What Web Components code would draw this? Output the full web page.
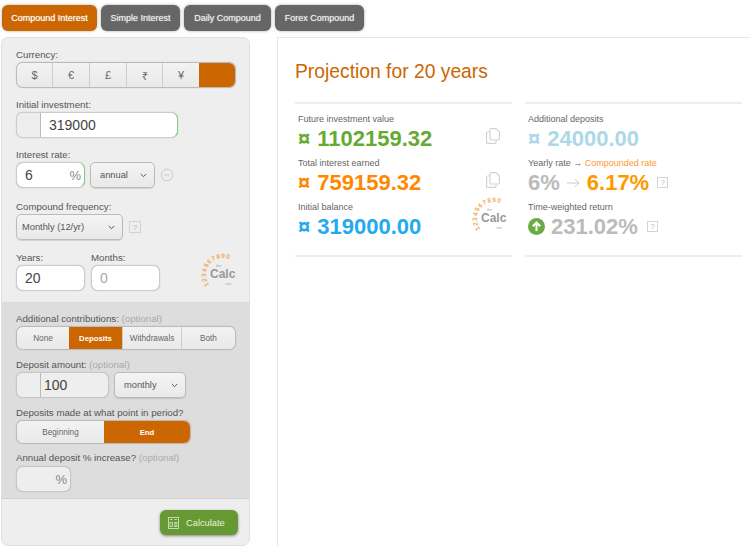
<!DOCTYPE html>
<html>
<head>
<meta charset="utf-8">
<title>Compound Interest</title>
<style>
html, body { margin: 0; height: 546px; overflow: hidden; background: #fff; }
body { font-family: "Liberation Sans", Arial, sans-serif; color: #555; }
calc-page { height: 546px; }
</style>
</head>
<body>
<calc-page>
  <calc-tabs slot="tabs">
    <calc-tab active>Compound Interest</calc-tab>
    <calc-tab style="width:79px">Simple Interest</calc-tab>
    <calc-tab style="width:87px">Daily Compound</calc-tab>
    <calc-tab style="width:89px">Forex Compound</calc-tab>
  </calc-tabs>

  <calc-form slot="form">
    <calc-field label="Currency:" style="--top:0">
      <calc-seg style="width:220px;--cols:35px 37px 37px 36px 37px 1fr">
        <span>$</span><span>€</span><span>£</span><span>₹</span><span>¥</span><span class="on"></span>
      </calc-seg>
    </calc-field>
    <calc-field label="Initial investment:">
      <calc-input addon ok style="width:162px">319000</calc-input>
    </calc-field>
    <calc-field label="Interest rate:">
      <calc-input ok suffix="%" style="width:69px">6</calc-input>
      <calc-select style="width:65px">annual</calc-select>
      <svg width="14" height="14" viewBox="0 0 14 14"><circle cx="7" cy="7" r="5.8" fill="none" stroke="#ccc" stroke-width="1"/><path d="M4.2 7h5.6" stroke="#ccc" stroke-width="1"/></svg>
    </calc-field>
    <calc-field label="Compound frequency:" style="--top:12px">
      <calc-select small style="width:107px">Monthly (12/yr)</calc-select>
      <calc-help style="margin-left:1px;width:12px;height:12px"></calc-help>
    </calc-field>
    <calc-duration>
      <calc-field label="Years:" style="--top:0"><calc-input style="width:69px">20</calc-input></calc-field>
      <calc-field label="Months:" style="--top:0"><calc-input muted style="width:69px">0</calc-input></calc-field>
      <calc-logo style="margin:2px 0 0 auto"></calc-logo>
    </calc-duration>
  </calc-form>

  <calc-extra slot="extra">
    <calc-field style="--top:0">
      <span slot="label">Additional contributions: <i>(optional)</i></span>
      <calc-seg small style="width:220px;height:24px;--cols:52px 53px 59px 1fr">
        <span>None</span><span class="on">Deposits</span><span>Withdrawals</span><span>Both</span>
      </calc-seg>
    </calc-field>
    <calc-field style="--top:8px">
      <span slot="label">Deposit amount: <i>(optional)</i></span>
      <calc-input addon flat style="width:93px">100</calc-input>
      <calc-select style="width:72px">monthly</calc-select>
    </calc-field>
    <calc-field label="Deposits made at what point in period?" style="--top:8px">
      <calc-seg small style="width:175px;height:24px;--cols:87px 1fr">
        <span>Beginning</span><span class="on">End</span>
      </calc-seg>
    </calc-field>
    <calc-field style="--top:7px;--label-gap:2px">
      <span slot="label">Annual deposit % increase? <i>(optional)</i></span>
      <calc-input flat suffix="%" style="width:55px"></calc-input>
    </calc-field>
  </calc-extra>

  <calc-footer slot="footer"><calc-button>Calculate</calc-button></calc-footer>

  <calc-results slot="results" title-text="Projection for 20 years">
    <calc-card slot="left">
      <calc-stat label="Future investment value" color="#66aa33" cur="¤" value="1102159.32"><calc-copy></calc-copy></calc-stat>
      <calc-stat label="Total interest earned" color="#ff8800" cur="¤" value="759159.32"><calc-copy></calc-copy></calc-stat>
      <calc-stat label="Initial balance" color="#22aaee" cur="¤" value="319000.00"><calc-logo style="margin:-8px -5px 0 0"></calc-logo></calc-stat>
    </calc-card>
    <calc-card slot="right">
      <calc-stat label="Additional deposits" color="#acd8e8" cur="¤" value="24000.00"></calc-stat>
      <calc-stat color="#bbb">
        <span slot="label">Yearly rate → <span style="color:#ff9933">Compounded rate</span></span>
        <span slot="value" style="display:flex;align-items:center">6%
          <svg width="13" height="10" viewBox="0 0 13 10" style="margin:0 7px 0 7px"><path d="M0 5h12M8 1l4 4-4 4" fill="none" stroke="#ccc" stroke-width="1"/></svg>
          <span style="color:#ff9900">6.17%</span>
          <calc-help style="margin-left:8px"></calc-help>
        </span>
      </calc-stat>
      <calc-stat color="#bbb">
        <span slot="label">Time-weighted return</span>
        <span slot="value" style="display:flex;align-items:center">
          <svg width="17" height="17" viewBox="0 0 17 17" style="margin-right:6px"><circle cx="8.5" cy="8.5" r="8.5" fill="#6aab45"/><path d="M8.5 13V4.5M4.8 8.2l3.7-3.7 3.7 3.7" fill="none" stroke="#fff" stroke-width="2"/></svg>
          231.02%
          <calc-help style="margin-left:9px"></calc-help>
        </span>
      </calc-stat>
    </calc-card>
  </calc-results>
</calc-page>

<script>
// small helper so each class doesn't repeat the attachShadow lines
function shadow(el, html) {
    el.attachShadow({ mode: 'open' }).innerHTML = html;
    return el.shadowRoot;
}

class CalcPage extends HTMLElement {
    constructor() {
        super();
        shadow(this, `
        <style>
        :host { display: block; }
        .tabs { padding: 5px 0 6px 2px; }
        .main { display: flex; align-items: stretch; height: 509px; }
        .left {
            width: 249px; margin-left: 1px; background: #eee; border: 1px solid #e0e0e0;
            border-radius: 7px; box-sizing: border-box; height: 509px; overflow: hidden;
            display: flex; flex-direction: column; flex: none;
        }
        .right { flex: 1; margin-left: 27px; }
        </style>
        <div class="tabs"><slot name="tabs"></slot></div>
        <div class="main">
            <div class="left">
                <slot name="form"></slot>
                <slot name="extra"></slot>
                <slot name="footer"></slot>
            </div>
            <div class="right"><slot name="results"></slot></div>
        </div>`);
    }
}

class CalcTabs extends HTMLElement {
    constructor() {
        super();
        shadow(this, `<style>:host { display: flex; gap: 4px; }</style><slot></slot>`);
    }
}

class CalcTab extends HTMLElement {
    constructor() {
        super();
        shadow(this, `
        <style>
        :host {
            display: flex; align-items: center; justify-content: center; box-sizing: border-box;
            width: 95px; height: 26px; padding-bottom: 1px; border-radius: 6px; background: #666; color: #eee;
            font-size: 9px; text-shadow: 0 0 1px rgba(255,255,255,.7); box-shadow: 0 0 3px rgba(0,0,0,.35);
        }
        :host([active]) { background: #cc6600; color: #fff; }
        </style><slot></slot>`);
    }
}

class CalcForm extends HTMLElement {
    constructor() {
        super();
        shadow(this, `<style>:host { display: block; padding: 10px 12px 12px 14px; height: 264px; box-sizing: border-box; }</style><slot></slot>`);
    }
}

class CalcExtra extends HTMLElement {
    constructor() {
        super();
        shadow(this, `<style>:host { display: block; background: #ddd; padding: 10px 12px 0 14px; height: 197px; box-sizing: border-box; border-bottom: 1px solid #d0d0d0; }</style><slot></slot>`);
    }
}

class CalcFooter extends HTMLElement {
    constructor() {
        super();
        shadow(this, `<style>:host { display: flex; justify-content: flex-end; padding: 11px 11px 0 0; }</style><slot></slot>`);
    }
}

class CalcDuration extends HTMLElement {
    constructor() {
        super();
        shadow(this, `<style>:host { display: flex; gap: 6px; margin-top: 11px; }</style><slot></slot>`);
    }
}

class CalcField extends HTMLElement {
    constructor() {
        super();
        shadow(this, `
        <style>
        :host { display: block; margin-top: var(--top, 10px); }
        .lab { height: 13px; line-height: 13px; font-size: 9.7px; color: #555; margin-bottom: var(--label-gap, 1px); white-space: nowrap; }
        .row { display: flex; align-items: center; gap: 5px; }
        </style>
        <div class="lab"><slot name="label">${this.getAttribute('label') || ''}</slot></div>
        <div class="row"><slot></slot></div>`);
    }
    connectedCallback() {
        // "(optional)" hints live in the light DOM, so they get styled here
        this.querySelectorAll('i').forEach(i => { i.style.cssText = 'font-style:normal;color:#aaa'; });
    }
}

class CalcSeg extends HTMLElement {
    constructor() {
        super();
        this.root = shadow(this, `
        <style>
        :host {
            display: grid; grid-template-columns: var(--cols); box-sizing: border-box;
            height: 26px; border: 1px solid #bbb; border-radius: 7px; overflow: hidden; background: #eee;
            color: #666; font-size: 11px; flex: none; box-shadow: 0 0 1px #aaa;
        }
        :host([small]) { font-size: 8.2px; }
        ::slotted(span) {
            display: flex; align-items: center; justify-content: center;
            border-left: 1px solid #ccc; background: linear-gradient(#f2f2f2, #e9e9e9);
        }
        ::slotted(span:first-child) { border-left: 0; }
        ::slotted(span.on) { background: #cc6600; color: #fff; font-weight: bold; border-left: 0; font-size: 7.8px; }
        </style><slot></slot>`);
    }
}

class CalcInput extends HTMLElement {
    constructor() {
        super();
        const addon = this.hasAttribute('addon') ? '<div class="addon"></div>' : '';
        const suffix = this.getAttribute('suffix');
        shadow(this, `
        <style>
        :host {
            display: flex; align-items: stretch; box-sizing: border-box; height: 26px;
            border: 1px solid #ccc; border-radius: 7px; background: #fff; overflow: hidden;
            font-size: 14px; color: #444; flex: none; box-shadow: 0 0 1px #aaa;
        }
        :host([ok]) { border-right-color: #7ed07e; }
        :host([flat]) { background: #eee; border-color: #c8c8c8; }
        :host([muted]) { color: #aaa; }
        .addon { width: 23px; background: #eee; border-right: 1px solid #bbb; flex: none; }
        .val { flex: 1; display: flex; align-items: center; padding-left: 8px; }
        :host([flat]) .val { padding-left: 3px; }
        .suf { display: flex; align-items: center; padding-right: 3px; color: #888; font-size: 13px; }
        </style>
        ${addon}<div class="val"><slot></slot></div>${suffix ? `<div class="suf">${suffix}</div>` : ''}`);
    }
}

class CalcSelect extends HTMLElement {
    constructor() {
        super();
        shadow(this, `
        <style>
        :host {
            display: flex; align-items: center; justify-content: space-between; box-sizing: border-box;
            height: 26px; padding: 0 7px 0 9px; border: 1px solid #bbb; border-radius: 5px;
            background: linear-gradient(#f4f4f4, #e9e9e9); color: #555; font-size: 9.3px; flex: none;
            box-shadow: 0 1px 1px rgba(0,0,0,.12);
        }
        :host([small]) { padding-left: 5px; }
        </style>
        <span><slot></slot></span>
        <svg width="7" height="5" viewBox="0 0 7 5"><path d="M.8 1l2.7 2.7L6.2 1" fill="none" stroke="#555" stroke-width="1"/></svg>`);
    }
}

class CalcHelp extends HTMLElement {
    constructor() {
        super();
        shadow(this, `
        <style>
        :host {
            display: inline-flex; align-items: center; justify-content: center; box-sizing: border-box;
            width: 11px; height: 11px; border: 1px solid #d4d4d4; color: #bbb; font-size: 8px; font-weight: normal; flex: none;
            font-family: "Liberation Sans", sans-serif; letter-spacing: 0;
        }
        </style>?`);
    }
}

class CalcLogo extends HTMLElement {
    constructor() {
        super();
        shadow(this, `
        <style>:host { display: block; width: 36px; height: 38px; flex: none; }</style>
        <svg width="36" height="38" viewBox="0 0 36 38">
            <defs><path id="arc" d="M8.4 32.2A17 17 0 0 1 30 7"/></defs>
            <text font-family="Liberation Sans" font-size="6.4" font-weight="bold" fill="#ebac58" letter-spacing=".9"><textPath href="#arc">1234567890</textPath></text>
            <text x="15" y="13.5" font-family="Liberation Sans" font-size="4" font-style="italic" fill="#aaa">the</text>
            <text x="9" y="25" font-family="Liberation Sans" font-size="12" font-weight="bold" fill="#999">Calc</text>
            <text x="24" y="32" font-family="Liberation Sans" font-size="4" font-style="italic" fill="#aaa">site</text>
        </svg>`);
    }
}

class CalcButton extends HTMLElement {
    constructor() {
        super();
        shadow(this, `
        <style>
        :host {
            display: flex; align-items: center; box-sizing: border-box; width: 78px; height: 25px; padding-left: 8px; gap: 7px;
            background: #669933; border-radius: 6px; color: #e6f2d8; font-size: 9.3px; box-shadow: 0 1px 3px rgba(0,0,0,.45);
        }
        </style>
        <svg width="11" height="12" viewBox="0 0 11 12" fill="none" stroke="#c5dab0" stroke-width="1">
            <rect x=".5" y=".5" width="10" height="11"/>
            <path d="M2 2.5h2.5M6.5 2.5H9M2 5.5h2.5v4H2zM6.5 5.5H9v1.2H6.5zM6.5 8.3H9v1.2H6.5z"/>
        </svg>
        <span><slot></slot></span>`);
    }
}

class CalcResults extends HTMLElement {
    constructor() {
        super();
        shadow(this, `
        <style>
        :host {
            display: block; box-sizing: border-box; height: 509px; background: #fff;
            border-left: 1px solid #e6e6e6; border-top: 1px solid #e6e6e6; padding: 0 8px 0 17px;
        }
        h2 { margin: 0; height: 64px; line-height: 68px; font-size: 19.3px; font-weight: normal; color: #cc6600; white-space: nowrap; }
        .cols { display: flex; gap: 13px; }
        </style>
        <h2>${this.getAttribute('title-text')}</h2>
        <div class="cols"><slot name="left"></slot><slot name="right"></slot></div>`);
    }
}

class CalcCard extends HTMLElement {
    constructor() {
        super();
        shadow(this, `<style>:host { display: block; width: 217px; box-sizing: border-box; border-top: 2px solid #eee; border-bottom: 2px solid #eee; padding: 6px 0 13px 3px; }</style><slot></slot>`);
    }
}

class CalcStat extends HTMLElement {
    constructor() {
        super();
        const color = this.getAttribute('color');
        const cur = this.getAttribute('cur');
        shadow(this, `
        <style>
        :host { display: flex; align-items: center; justify-content: space-between; height: 44px; box-sizing: border-box; padding-right: 9px; }
        .lab { height: 13px; line-height: 13px; font-size: 9px; color: #666; white-space: nowrap; }
        .val { height: 25px; line-height: 25px; font-size: 22px; font-weight: bold; color: ${color}; white-space: nowrap; }
        .cur { margin-right: 7px; }
        </style>
        <div>
            <div class="lab"><slot name="label">${this.getAttribute('label') || ''}</slot></div>
            <div class="val"><slot name="value">${cur ? `<span class="cur">${cur}</span>` : ''}${this.getAttribute('value') || ''}</slot></div>
        </div>
        <slot></slot>`);
    }
}

class CalcCopy extends HTMLElement {
    constructor() {
        super();
        shadow(this, `
        <style>:host { display: block; width: 14px; height: 16px; margin: 8px 3px 0 0; flex: none; }</style>
        <svg width="14" height="16" viewBox="0 0 14 16" fill="none" stroke="#d2d2d2" stroke-width="1.1">
            <path d="M5 .6h5l3.4 3.4V11a1 1 0 0 1-1 1H5a1 1 0 0 1-1-1V1.6a1 1 0 0 1 1-1z"/>
            <path d="M4 4H1.6a1 1 0 0 0-1 1v9.4a1 1 0 0 0 1 1H9a1 1 0 0 0 1-1V12"/>
        </svg>`);
    }
}

customElements.define('calc-page', CalcPage);
customElements.define('calc-tabs', CalcTabs);
customElements.define('calc-tab', CalcTab);
customElements.define('calc-form', CalcForm);
customElements.define('calc-extra', CalcExtra);
customElements.define('calc-footer', CalcFooter);
customElements.define('calc-duration', CalcDuration);
customElements.define('calc-field', CalcField);
customElements.define('calc-seg', CalcSeg);
customElements.define('calc-input', CalcInput);
customElements.define('calc-select', CalcSelect);
customElements.define('calc-help', CalcHelp);
customElements.define('calc-logo', CalcLogo);
customElements.define('calc-button', CalcButton);
customElements.define('calc-results', CalcResults);
customElements.define('calc-card', CalcCard);
customElements.define('calc-stat', CalcStat);
customElements.define('calc-copy', CalcCopy);
</script>
</body>
</html>
